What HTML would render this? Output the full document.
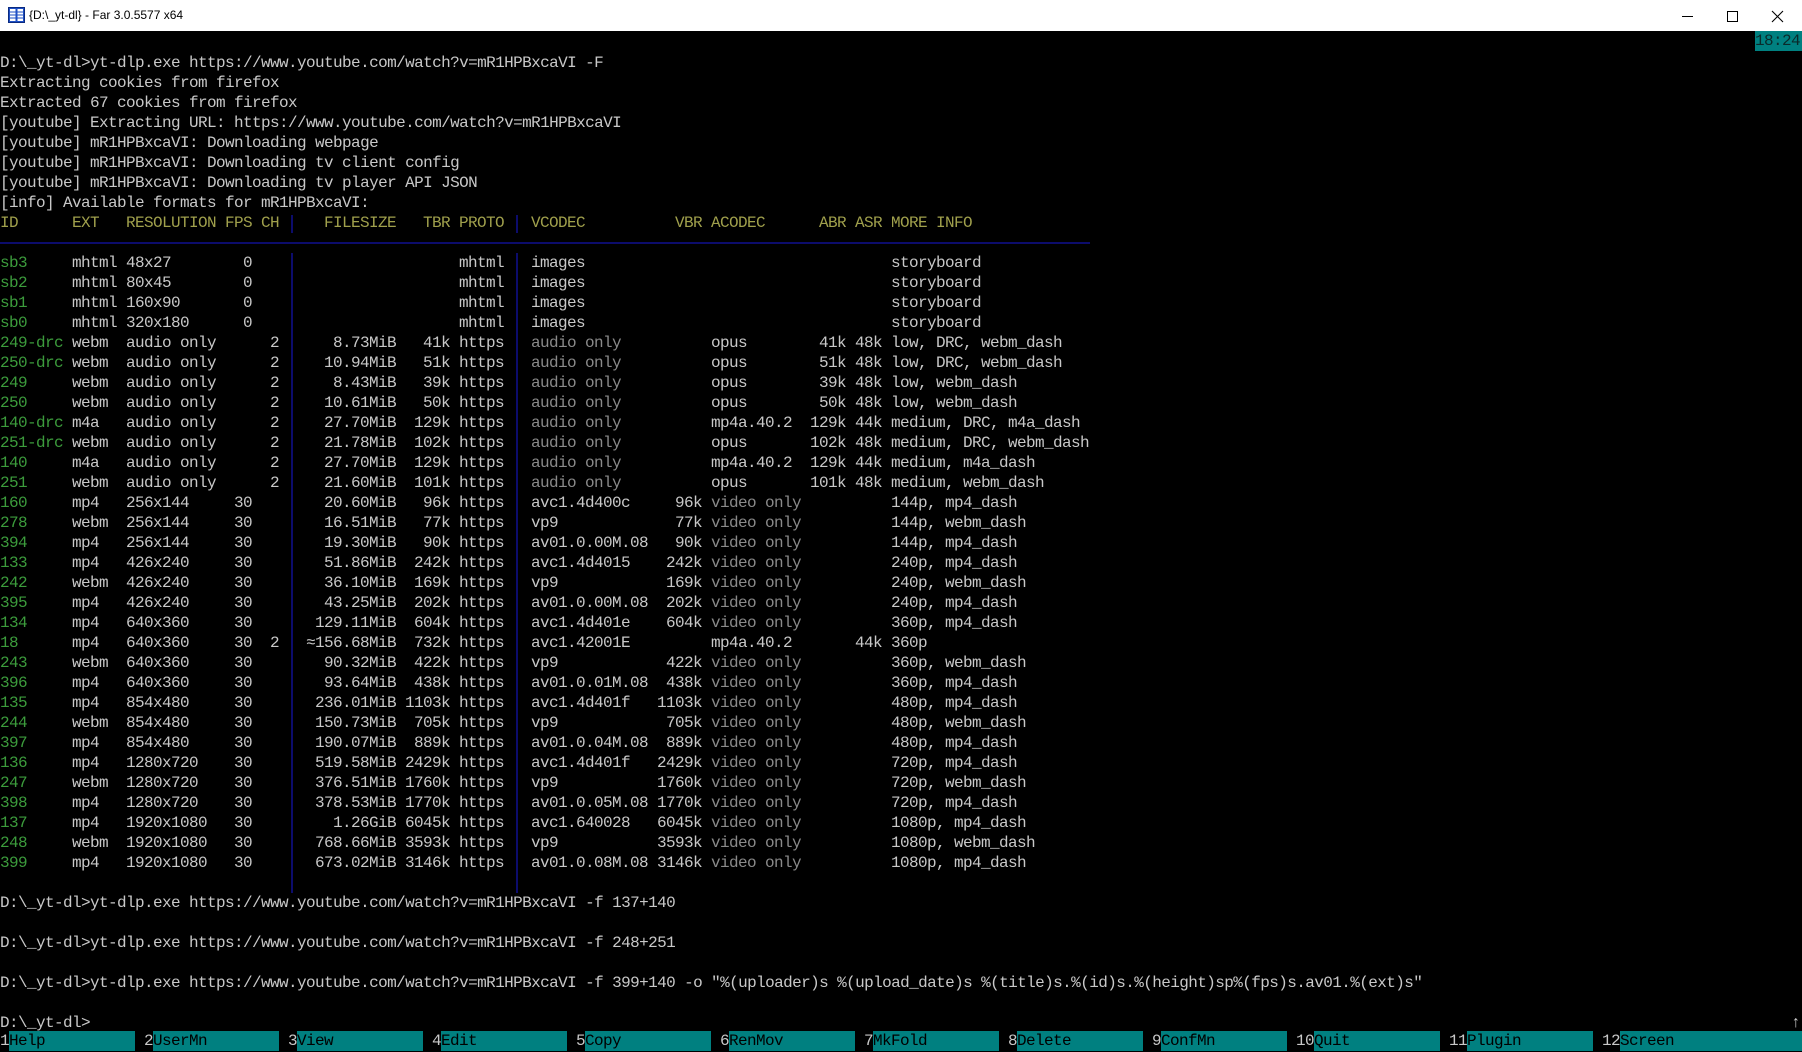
<!DOCTYPE html>
<html><head><meta charset="utf-8">
<style>
html,body{margin:0;padding:0;background:#000;width:1802px;height:1052px;overflow:hidden}
#tb{position:absolute;left:0;top:0;width:1802px;height:31px;background:#fff;font-family:"Liberation Sans",sans-serif;font-size:12px;color:#000}
#tb .t{position:absolute;left:29px;top:8px}
#scr{position:absolute;left:0;top:33px;width:1802px;height:1019px;font-family:"Liberation Mono",monospace;font-size:16px;letter-spacing:-0.6px;color:#c8c8c8}
.r{position:absolute;left:0;height:20px;line-height:20px;white-space:pre;width:1802px}
.r span{position:absolute;top:0;white-space:pre}
.g{color:#3c9c3c}.h{color:#a0a04c}.d{color:#8a8a8a}
.id{left:0}.ex{left:72px}.rs{left:126px}
.fp{left:225px;width:27px;text-align:right}
.ch{left:261px;width:18px;text-align:right}
.fs{left:306px;width:90px;text-align:right}
.tb{left:405px;width:45px;text-align:right}
.pr{left:459px}.vc{left:531px}
.vb{left:657px;width:45px;text-align:right}
.ac{left:711px}
.ab{left:810px;width:36px;text-align:right}
.as{left:855px;width:27px;text-align:right}
.mi{left:891px}
.vl{position:absolute;width:2px;background:#0c0c6c}
.kd{position:absolute;top:998px;height:20px;line-height:20px;color:#c8c8c8;white-space:pre}
.kl{position:absolute;top:998px;height:20px;line-height:20px;background:#008080;color:#000;white-space:pre}
</style></head><body>
<div id="tb">
<svg style="position:absolute;left:8px;top:7px" width="17" height="17" viewBox="0 0 17 17"><rect x="0.5" y="0.5" width="16" height="15" fill="#1e4fc4" stroke="#0a2a80"/><rect x="2" y="2" width="5.5" height="12" fill="#fff"/><rect x="9.5" y="2" width="5.5" height="12" fill="#fff"/><g stroke="#1e4fc4" stroke-width="1"><line x1="2" y1="5" x2="7.5" y2="5"/><line x1="2" y1="8" x2="7.5" y2="8"/><line x1="2" y1="11" x2="7.5" y2="11"/><line x1="9.5" y1="5" x2="15" y2="5"/><line x1="9.5" y1="8" x2="15" y2="8"/><line x1="9.5" y1="11" x2="15" y2="11"/></g></svg>
<div class="t">{D:\_yt-dl} - Far 3.0.5577 x64</div>
<svg style="position:absolute;left:1680px;top:8px" width="120" height="16" viewBox="0 0 120 16"><line x1="2" y1="8.5" x2="13" y2="8.5" stroke="#000"/><rect x="47.5" y="3.5" width="10" height="10" fill="none" stroke="#000"/><path d="M92 3 L103 14 M103 3 L92 14" stroke="#000" stroke-width="1.1"/></svg>
</div>
<div id="scr">
<div class="r" style="top:-2px"><span style="left:1755px;width:47px;background:#008080;color:#0a2a2a">18:24</span></div>
<div class="r" style="top:20px">D:\_yt-dl&gt;yt-dlp.exe https://www.youtube.com/watch?v=mR1HPBxcaVI -F</div>
<div class="r" style="top:40px">Extracting cookies from firefox</div>
<div class="r" style="top:60px">Extracted 67 cookies from firefox</div>
<div class="r" style="top:80px">[youtube] Extracting URL: https://www.youtube.com/watch?v=mR1HPBxcaVI</div>
<div class="r" style="top:100px">[youtube] mR1HPBxcaVI: Downloading webpage</div>
<div class="r" style="top:120px">[youtube] mR1HPBxcaVI: Downloading tv client config</div>
<div class="r" style="top:140px">[youtube] mR1HPBxcaVI: Downloading tv player API JSON</div>
<div class="r" style="top:160px">[info] Available formats for mR1HPBxcaVI:</div>
<div class="r h" style="top:180px"><span class="id">ID</span><span class="ex">EXT</span><span class="rs">RESOLUTION</span><span class="fp">FPS</span><span class="ch">CH</span><span class="fs">FILESIZE</span><span class="tb">TBR</span><span class="pr">PROTO</span><span class="vc">VCODEC</span><span class="vb">VBR</span><span class="ac">ACODEC</span><span class="ab">ABR</span><span class="as">ASR</span><span class="mi">MORE INFO</span></div>
<div style="position:absolute;left:0;top:209px;width:1090px;height:2px;background:#0c0c6c"></div>
<div class="vl" style="left:291px;top:182px;height:18px"></div>
<div class="vl" style="left:516px;top:182px;height:18px"></div>
<div class="vl" style="left:291px;top:220px;height:640px"></div>
<div class="vl" style="left:516px;top:220px;height:640px"></div>

<div class="r" style="top:220px"><span class="id g">sb3</span><span class="ex">mhtml</span><span class="rs">48x27</span><span class="fp">0</span><span class="pr">mhtml</span><span class="vc">images</span><span class="mi">storyboard</span></div>
<div class="r" style="top:240px"><span class="id g">sb2</span><span class="ex">mhtml</span><span class="rs">80x45</span><span class="fp">0</span><span class="pr">mhtml</span><span class="vc">images</span><span class="mi">storyboard</span></div>
<div class="r" style="top:260px"><span class="id g">sb1</span><span class="ex">mhtml</span><span class="rs">160x90</span><span class="fp">0</span><span class="pr">mhtml</span><span class="vc">images</span><span class="mi">storyboard</span></div>
<div class="r" style="top:280px"><span class="id g">sb0</span><span class="ex">mhtml</span><span class="rs">320x180</span><span class="fp">0</span><span class="pr">mhtml</span><span class="vc">images</span><span class="mi">storyboard</span></div>
<div class="r" style="top:300px"><span class="id g">249-drc</span><span class="ex">webm</span><span class="rs">audio only</span><span class="ch">2</span><span class="fs">8.73MiB</span><span class="tb">41k</span><span class="pr">https</span><span class="vc d">audio only</span><span class="ac">opus</span><span class="ab">41k</span><span class="as">48k</span><span class="mi">low, DRC, webm_dash</span></div>
<div class="r" style="top:320px"><span class="id g">250-drc</span><span class="ex">webm</span><span class="rs">audio only</span><span class="ch">2</span><span class="fs">10.94MiB</span><span class="tb">51k</span><span class="pr">https</span><span class="vc d">audio only</span><span class="ac">opus</span><span class="ab">51k</span><span class="as">48k</span><span class="mi">low, DRC, webm_dash</span></div>
<div class="r" style="top:340px"><span class="id g">249</span><span class="ex">webm</span><span class="rs">audio only</span><span class="ch">2</span><span class="fs">8.43MiB</span><span class="tb">39k</span><span class="pr">https</span><span class="vc d">audio only</span><span class="ac">opus</span><span class="ab">39k</span><span class="as">48k</span><span class="mi">low, webm_dash</span></div>
<div class="r" style="top:360px"><span class="id g">250</span><span class="ex">webm</span><span class="rs">audio only</span><span class="ch">2</span><span class="fs">10.61MiB</span><span class="tb">50k</span><span class="pr">https</span><span class="vc d">audio only</span><span class="ac">opus</span><span class="ab">50k</span><span class="as">48k</span><span class="mi">low, webm_dash</span></div>
<div class="r" style="top:380px"><span class="id g">140-drc</span><span class="ex">m4a</span><span class="rs">audio only</span><span class="ch">2</span><span class="fs">27.70MiB</span><span class="tb">129k</span><span class="pr">https</span><span class="vc d">audio only</span><span class="ac">mp4a.40.2</span><span class="ab">129k</span><span class="as">44k</span><span class="mi">medium, DRC, m4a_dash</span></div>
<div class="r" style="top:400px"><span class="id g">251-drc</span><span class="ex">webm</span><span class="rs">audio only</span><span class="ch">2</span><span class="fs">21.78MiB</span><span class="tb">102k</span><span class="pr">https</span><span class="vc d">audio only</span><span class="ac">opus</span><span class="ab">102k</span><span class="as">48k</span><span class="mi">medium, DRC, webm_dash</span></div>
<div class="r" style="top:420px"><span class="id g">140</span><span class="ex">m4a</span><span class="rs">audio only</span><span class="ch">2</span><span class="fs">27.70MiB</span><span class="tb">129k</span><span class="pr">https</span><span class="vc d">audio only</span><span class="ac">mp4a.40.2</span><span class="ab">129k</span><span class="as">44k</span><span class="mi">medium, m4a_dash</span></div>
<div class="r" style="top:440px"><span class="id g">251</span><span class="ex">webm</span><span class="rs">audio only</span><span class="ch">2</span><span class="fs">21.60MiB</span><span class="tb">101k</span><span class="pr">https</span><span class="vc d">audio only</span><span class="ac">opus</span><span class="ab">101k</span><span class="as">48k</span><span class="mi">medium, webm_dash</span></div>
<div class="r" style="top:460px"><span class="id g">160</span><span class="ex">mp4</span><span class="rs">256x144</span><span class="fp">30</span><span class="fs">20.60MiB</span><span class="tb">96k</span><span class="pr">https</span><span class="vc">avc1.4d400c</span><span class="vb">96k</span><span class="ac d">video only</span><span class="mi">144p, mp4_dash</span></div>
<div class="r" style="top:480px"><span class="id g">278</span><span class="ex">webm</span><span class="rs">256x144</span><span class="fp">30</span><span class="fs">16.51MiB</span><span class="tb">77k</span><span class="pr">https</span><span class="vc">vp9</span><span class="vb">77k</span><span class="ac d">video only</span><span class="mi">144p, webm_dash</span></div>
<div class="r" style="top:500px"><span class="id g">394</span><span class="ex">mp4</span><span class="rs">256x144</span><span class="fp">30</span><span class="fs">19.30MiB</span><span class="tb">90k</span><span class="pr">https</span><span class="vc">av01.0.00M.08</span><span class="vb">90k</span><span class="ac d">video only</span><span class="mi">144p, mp4_dash</span></div>
<div class="r" style="top:520px"><span class="id g">133</span><span class="ex">mp4</span><span class="rs">426x240</span><span class="fp">30</span><span class="fs">51.86MiB</span><span class="tb">242k</span><span class="pr">https</span><span class="vc">avc1.4d4015</span><span class="vb">242k</span><span class="ac d">video only</span><span class="mi">240p, mp4_dash</span></div>
<div class="r" style="top:540px"><span class="id g">242</span><span class="ex">webm</span><span class="rs">426x240</span><span class="fp">30</span><span class="fs">36.10MiB</span><span class="tb">169k</span><span class="pr">https</span><span class="vc">vp9</span><span class="vb">169k</span><span class="ac d">video only</span><span class="mi">240p, webm_dash</span></div>
<div class="r" style="top:560px"><span class="id g">395</span><span class="ex">mp4</span><span class="rs">426x240</span><span class="fp">30</span><span class="fs">43.25MiB</span><span class="tb">202k</span><span class="pr">https</span><span class="vc">av01.0.00M.08</span><span class="vb">202k</span><span class="ac d">video only</span><span class="mi">240p, mp4_dash</span></div>
<div class="r" style="top:580px"><span class="id g">134</span><span class="ex">mp4</span><span class="rs">640x360</span><span class="fp">30</span><span class="fs">129.11MiB</span><span class="tb">604k</span><span class="pr">https</span><span class="vc">avc1.4d401e</span><span class="vb">604k</span><span class="ac d">video only</span><span class="mi">360p, mp4_dash</span></div>
<div class="r" style="top:600px"><span class="id g">18</span><span class="ex">mp4</span><span class="rs">640x360</span><span class="fp">30</span><span class="ch">2</span><span class="fs">≈156.68MiB</span><span class="tb">732k</span><span class="pr">https</span><span class="vc">avc1.42001E</span><span class="ac">mp4a.40.2</span><span class="as">44k</span><span class="mi">360p</span></div>
<div class="r" style="top:620px"><span class="id g">243</span><span class="ex">webm</span><span class="rs">640x360</span><span class="fp">30</span><span class="fs">90.32MiB</span><span class="tb">422k</span><span class="pr">https</span><span class="vc">vp9</span><span class="vb">422k</span><span class="ac d">video only</span><span class="mi">360p, webm_dash</span></div>
<div class="r" style="top:640px"><span class="id g">396</span><span class="ex">mp4</span><span class="rs">640x360</span><span class="fp">30</span><span class="fs">93.64MiB</span><span class="tb">438k</span><span class="pr">https</span><span class="vc">av01.0.01M.08</span><span class="vb">438k</span><span class="ac d">video only</span><span class="mi">360p, mp4_dash</span></div>
<div class="r" style="top:660px"><span class="id g">135</span><span class="ex">mp4</span><span class="rs">854x480</span><span class="fp">30</span><span class="fs">236.01MiB</span><span class="tb">1103k</span><span class="pr">https</span><span class="vc">avc1.4d401f</span><span class="vb">1103k</span><span class="ac d">video only</span><span class="mi">480p, mp4_dash</span></div>
<div class="r" style="top:680px"><span class="id g">244</span><span class="ex">webm</span><span class="rs">854x480</span><span class="fp">30</span><span class="fs">150.73MiB</span><span class="tb">705k</span><span class="pr">https</span><span class="vc">vp9</span><span class="vb">705k</span><span class="ac d">video only</span><span class="mi">480p, webm_dash</span></div>
<div class="r" style="top:700px"><span class="id g">397</span><span class="ex">mp4</span><span class="rs">854x480</span><span class="fp">30</span><span class="fs">190.07MiB</span><span class="tb">889k</span><span class="pr">https</span><span class="vc">av01.0.04M.08</span><span class="vb">889k</span><span class="ac d">video only</span><span class="mi">480p, mp4_dash</span></div>
<div class="r" style="top:720px"><span class="id g">136</span><span class="ex">mp4</span><span class="rs">1280x720</span><span class="fp">30</span><span class="fs">519.58MiB</span><span class="tb">2429k</span><span class="pr">https</span><span class="vc">avc1.4d401f</span><span class="vb">2429k</span><span class="ac d">video only</span><span class="mi">720p, mp4_dash</span></div>
<div class="r" style="top:740px"><span class="id g">247</span><span class="ex">webm</span><span class="rs">1280x720</span><span class="fp">30</span><span class="fs">376.51MiB</span><span class="tb">1760k</span><span class="pr">https</span><span class="vc">vp9</span><span class="vb">1760k</span><span class="ac d">video only</span><span class="mi">720p, webm_dash</span></div>
<div class="r" style="top:760px"><span class="id g">398</span><span class="ex">mp4</span><span class="rs">1280x720</span><span class="fp">30</span><span class="fs">378.53MiB</span><span class="tb">1770k</span><span class="pr">https</span><span class="vc">av01.0.05M.08</span><span class="vb">1770k</span><span class="ac d">video only</span><span class="mi">720p, mp4_dash</span></div>
<div class="r" style="top:780px"><span class="id g">137</span><span class="ex">mp4</span><span class="rs">1920x1080</span><span class="fp">30</span><span class="fs">1.26GiB</span><span class="tb">6045k</span><span class="pr">https</span><span class="vc">avc1.640028</span><span class="vb">6045k</span><span class="ac d">video only</span><span class="mi">1080p, mp4_dash</span></div>
<div class="r" style="top:800px"><span class="id g">248</span><span class="ex">webm</span><span class="rs">1920x1080</span><span class="fp">30</span><span class="fs">768.66MiB</span><span class="tb">3593k</span><span class="pr">https</span><span class="vc">vp9</span><span class="vb">3593k</span><span class="ac d">video only</span><span class="mi">1080p, webm_dash</span></div>
<div class="r" style="top:820px"><span class="id g">399</span><span class="ex">mp4</span><span class="rs">1920x1080</span><span class="fp">30</span><span class="fs">673.02MiB</span><span class="tb">3146k</span><span class="pr">https</span><span class="vc">av01.0.08M.08</span><span class="vb">3146k</span><span class="ac d">video only</span><span class="mi">1080p, mp4_dash</span></div>

<div class="r" style="top:860px">D:\_yt-dl&gt;yt-dlp.exe https://www.youtube.com/watch?v=mR1HPBxcaVI -f 137+140</div>
<div class="r" style="top:900px">D:\_yt-dl&gt;yt-dlp.exe https://www.youtube.com/watch?v=mR1HPBxcaVI -f 248+251</div>
<div class="r" style="top:940px">D:\_yt-dl&gt;yt-dlp.exe https://www.youtube.com/watch?v=mR1HPBxcaVI -f 399+140 -o "%(uploader)s %(upload_date)s %(title)s.%(id)s.%(height)sp%(fps)s.av01.%(ext)s"</div>
<div class="r" style="top:980px">D:\_yt-dl&gt;<span style="left:1791px">↑</span></div>

<div class="kd" style="left:0">1</div><div class="kl" style="left:9px;width:126px">Help</div>
<div class="kd" style="left:144px">2</div><div class="kl" style="left:153px;width:126px">UserMn</div>
<div class="kd" style="left:288px">3</div><div class="kl" style="left:297px;width:126px">View</div>
<div class="kd" style="left:432px">4</div><div class="kl" style="left:441px;width:126px">Edit</div>
<div class="kd" style="left:576px">5</div><div class="kl" style="left:585px;width:126px">Copy</div>
<div class="kd" style="left:720px">6</div><div class="kl" style="left:729px;width:126px">RenMov</div>
<div class="kd" style="left:864px">7</div><div class="kl" style="left:873px;width:126px">MkFold</div>
<div class="kd" style="left:1008px">8</div><div class="kl" style="left:1017px;width:126px">Delete</div>
<div class="kd" style="left:1152px">9</div><div class="kl" style="left:1161px;width:126px">ConfMn</div>
<div class="kd" style="left:1296px">10</div><div class="kl" style="left:1314px;width:126px">Quit</div>
<div class="kd" style="left:1449px">11</div><div class="kl" style="left:1467px;width:126px">Plugin</div>
<div class="kd" style="left:1602px">12</div><div class="kl" style="left:1620px;width:182px">Screen</div>
</div>
</body></html>
